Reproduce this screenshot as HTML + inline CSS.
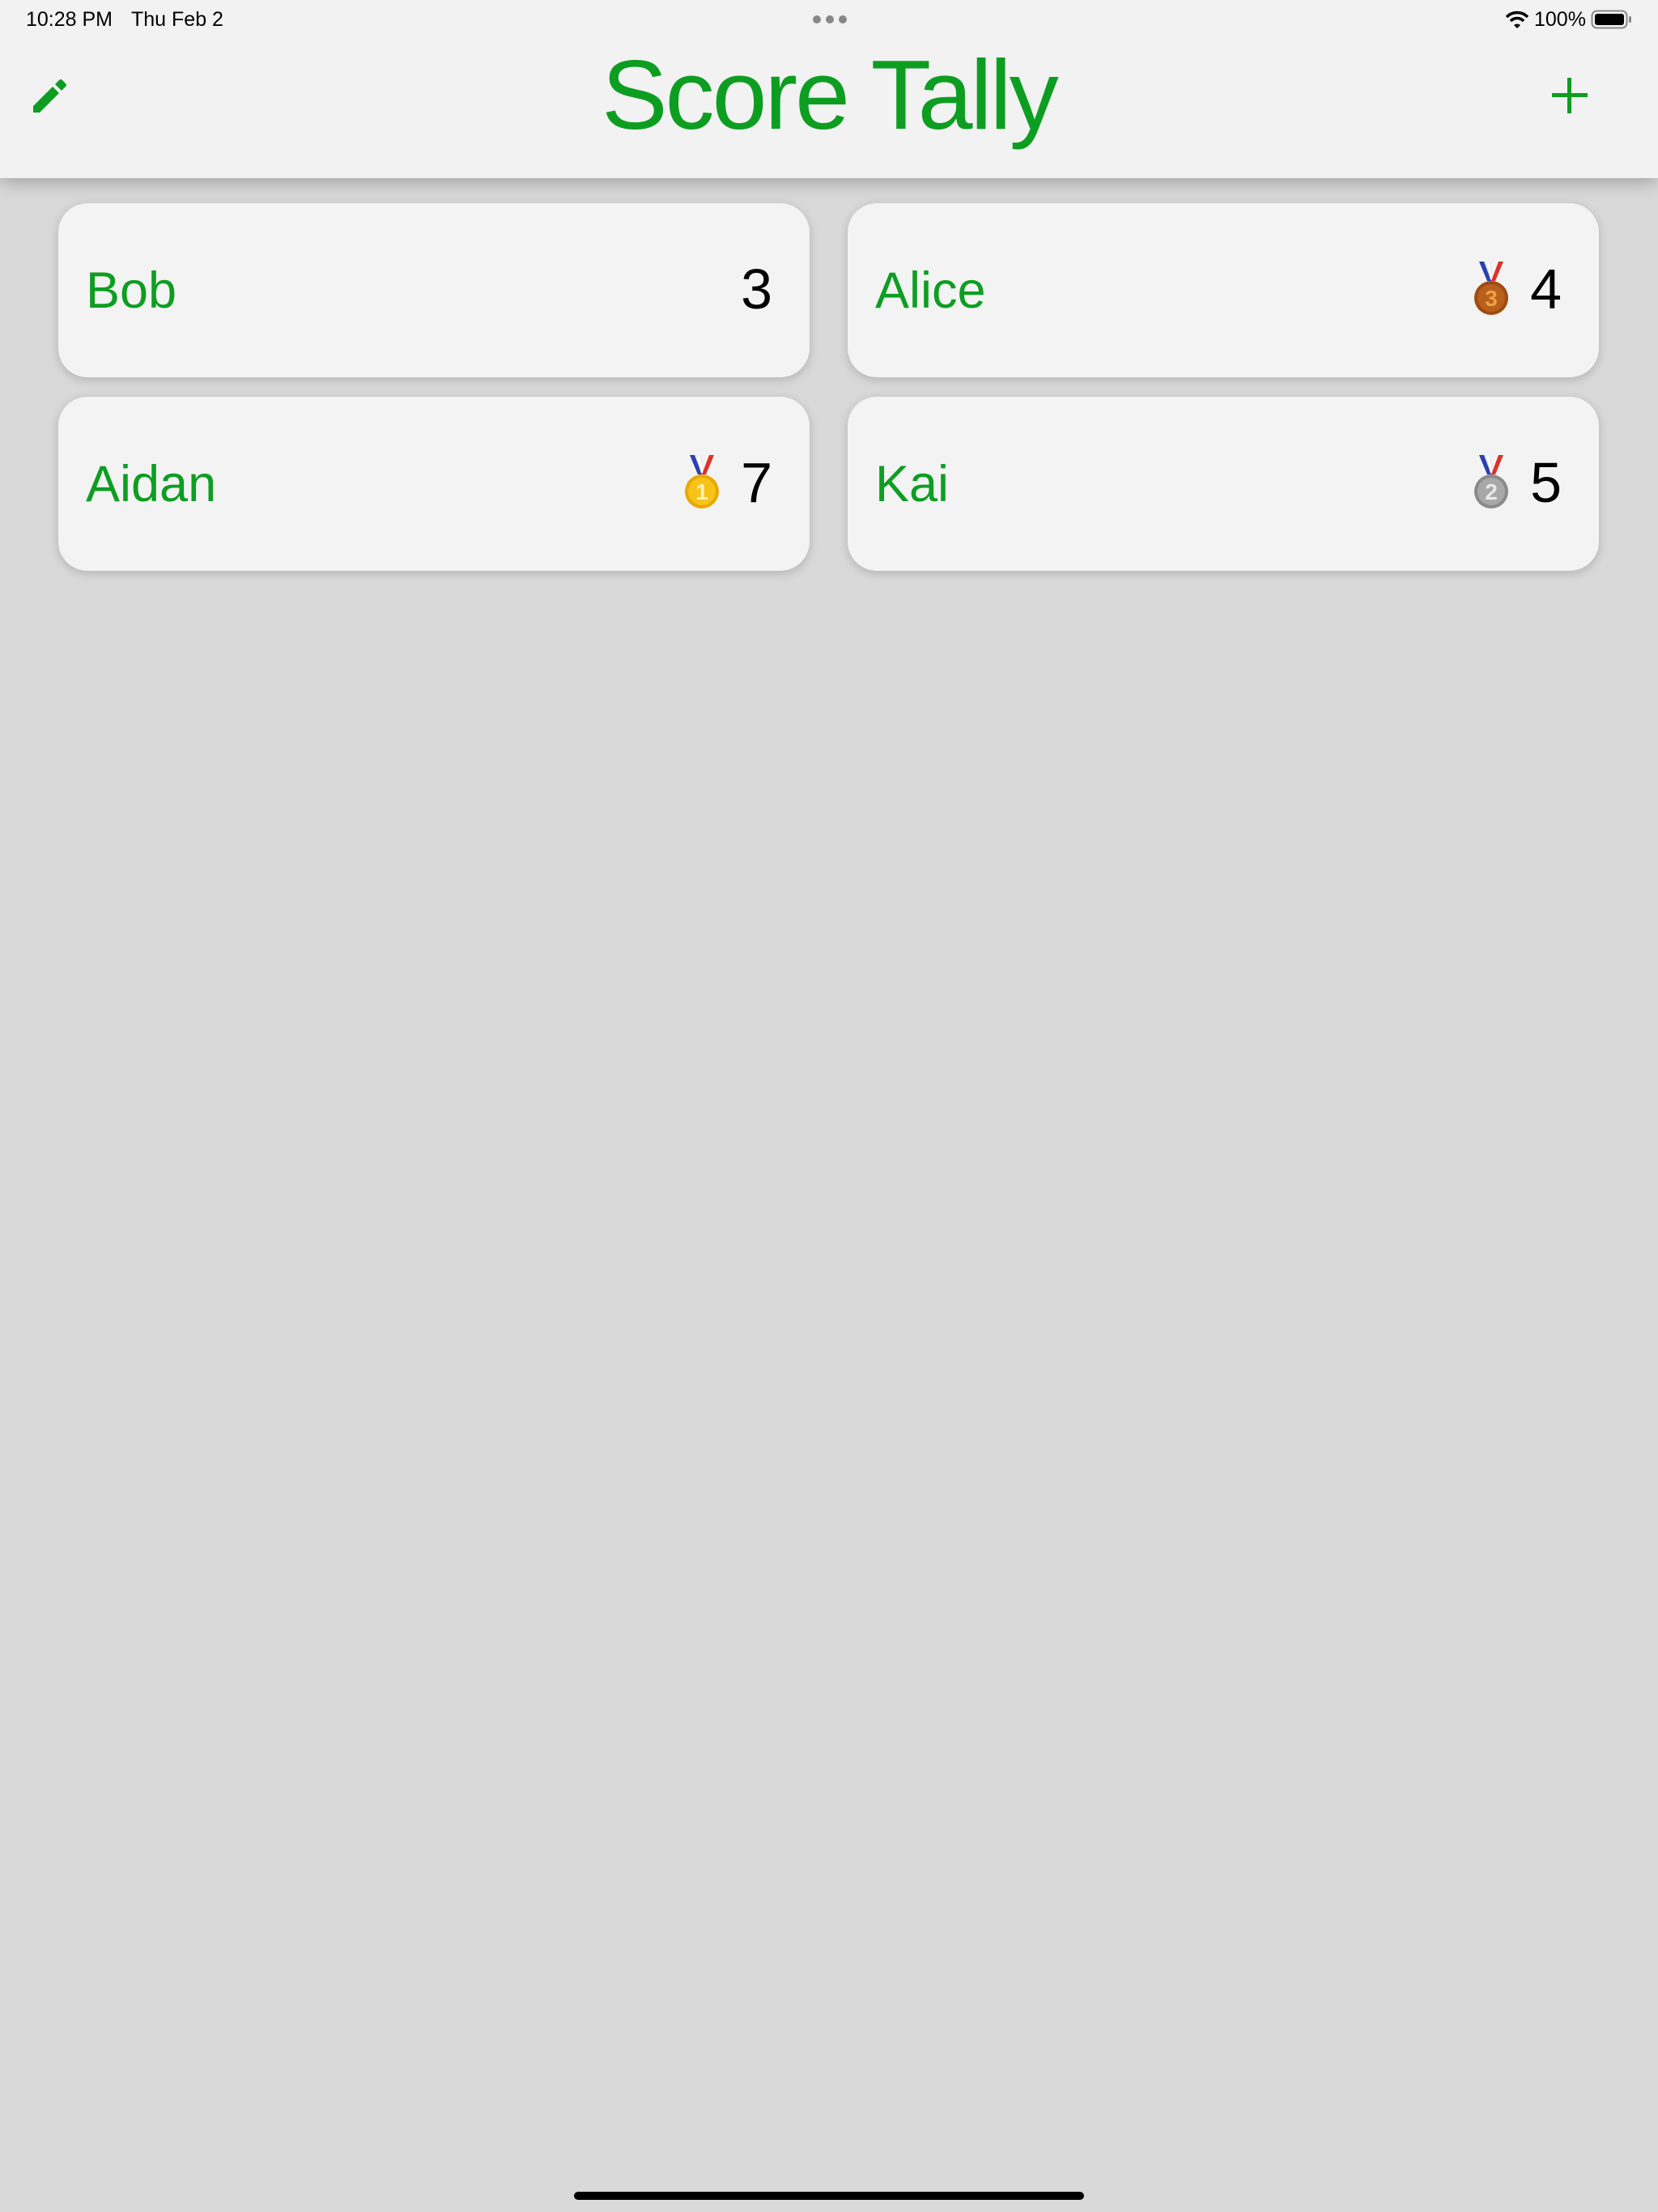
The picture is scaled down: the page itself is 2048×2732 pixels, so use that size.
<!DOCTYPE html>
<html><head><meta charset="utf-8"><style>
*{margin:0;padding:0;box-sizing:border-box}
html,body{width:2048px;height:2732px;overflow:hidden}
body{background:#d9d9d9;font-family:"Liberation Sans",sans-serif;position:relative}
.hdr{position:absolute;left:0;top:0;width:2048px;height:220px;background:#f2f2f2;box-shadow:0 4px 22px rgba(0,0,0,.28)}
.st{position:absolute;top:10px;font-size:25px;color:#000}
.title{position:absolute;left:0;width:2048px;top:47px;text-align:center;font-size:122px;letter-spacing:-3px;color:#0d9e21;line-height:140px}
.card{position:absolute;width:928px;height:215px;background:#f3f3f3;border-radius:36px;box-shadow:0 3px 12px rgba(0,0,0,.18)}
.name{position:absolute;left:34px;top:68px;font-size:63px;color:#0d9e21;line-height:80px}
.score{position:absolute;right:46px;top:64px;font-size:70px;color:#000;line-height:84px}
.medal{position:absolute;right:110px;top:72px;width:46px;height:68px}
.home{position:absolute;left:709px;top:2707px;width:630px;height:10px;border-radius:5px;background:#000}
</style></head><body>
<div class="hdr">
<div class="st" style="left:32px">10:28 PM</div>
<div class="st" style="left:162px">Thu Feb 2</div>
<svg style="position:absolute;left:1003px;top:18px" width="44" height="12"><circle cx="6" cy="6" r="5" fill="#888"/><circle cx="22" cy="6" r="5" fill="#888"/><circle cx="38" cy="6" r="5" fill="#888"/></svg>
<svg style="position:absolute;left:1859px;top:13px" width="30" height="22" viewBox="0 0 30 22"><path d="M2 8 A18 18 0 0 1 28 8" stroke="#000" stroke-width="3.5" fill="none"/><path d="M7 13 A11 11 0 0 1 23 13" stroke="#000" stroke-width="3.5" fill="none"/><path d="M11 18 L15 22 L19 18 A6 6 0 0 0 11 18Z" fill="#000"/></svg>
<div class="st" style="left:1895px">100%</div>
<svg style="position:absolute;left:1965px;top:12px" width="52" height="24"><rect x="1.5" y="1.5" width="43" height="21" rx="6" fill="none" stroke="#888" stroke-width="2"/><rect x="5" y="5" width="36" height="14" rx="3" fill="#000"/><rect x="47" y="8" width="3" height="8" rx="1.5" fill="#888"/></svg>
<svg style="position:absolute;left:38px;top:94px" width="50" height="50" viewBox="0 0 50 50"><path d="M3 37 L27 13 L35 21 L11 45 L3 45Z" fill="#0d9e21"/><path d="M30 10 L35 5 Q37 3 39 5 L43 9 Q45 11 43 13 L38 18Z" fill="#0d9e21"/></svg>
<svg style="position:absolute;left:1917px;top:96px" width="44" height="44"><rect x="19" y="0" width="5" height="44" fill="#0d9e21"/><rect x="0" y="19" width="44" height="5" fill="#0d9e21"/></svg>
<div class="title">Score Tally</div>
</div>

<div class="card" style="left:72px;top:251px"><div class="name">Bob</div><div class="score">3</div></div>
<div class="card" style="left:1047px;top:251px"><div class="name">Alice</div>
<svg class="medal" viewBox="0 0 46 68"><path d="M8 0 L18 24 L23 24 L14 0Z" fill="#2a3fb0"/><path d="M16 0 L22 22 L25 22 L21 0Z" fill="#fff" stroke="#ccc" stroke-width=".5"/><path d="M38 0 L28 24 L23 24 L32 0Z" fill="#e0302a"/><circle cx="23" cy="45" r="21" fill="#a04a12"/><circle cx="23" cy="45" r="17" fill="#b8601e"/><text x="23" y="55" text-anchor="middle" font-size="28" font-weight="bold" fill="#f0a040" font-family="Liberation Sans,sans-serif">3</text></svg>
<div class="score">4</div></div>
<div class="card" style="left:72px;top:490px"><div class="name">Aidan</div>
<svg class="medal" viewBox="0 0 46 68"><path d="M8 0 L18 24 L23 24 L14 0Z" fill="#2a3fb0"/><path d="M16 0 L22 22 L25 22 L21 0Z" fill="#fff" stroke="#ccc" stroke-width=".5"/><path d="M38 0 L28 24 L23 24 L32 0Z" fill="#e0302a"/><circle cx="23" cy="45" r="21" fill="#e8a800"/><circle cx="23" cy="45" r="17" fill="#f7c21a"/><text x="23" y="55" text-anchor="middle" font-size="28" font-weight="bold" fill="#fff3b0" font-family="Liberation Sans,sans-serif">1</text></svg>
<div class="score">7</div></div>
<div class="card" style="left:1047px;top:490px"><div class="name">Kai</div>
<svg class="medal" viewBox="0 0 46 68"><path d="M8 0 L18 24 L23 24 L14 0Z" fill="#2a3fb0"/><path d="M16 0 L22 22 L25 22 L21 0Z" fill="#fff" stroke="#ccc" stroke-width=".5"/><path d="M38 0 L28 24 L23 24 L32 0Z" fill="#e0302a"/><circle cx="23" cy="45" r="21" fill="#8a8a8a"/><circle cx="23" cy="45" r="17" fill="#a8a8a8"/><text x="23" y="55" text-anchor="middle" font-size="28" font-weight="bold" fill="#e8e8e8" font-family="Liberation Sans,sans-serif">2</text></svg>
<div class="score">5</div></div>

<div class="home"></div>
</body></html>
